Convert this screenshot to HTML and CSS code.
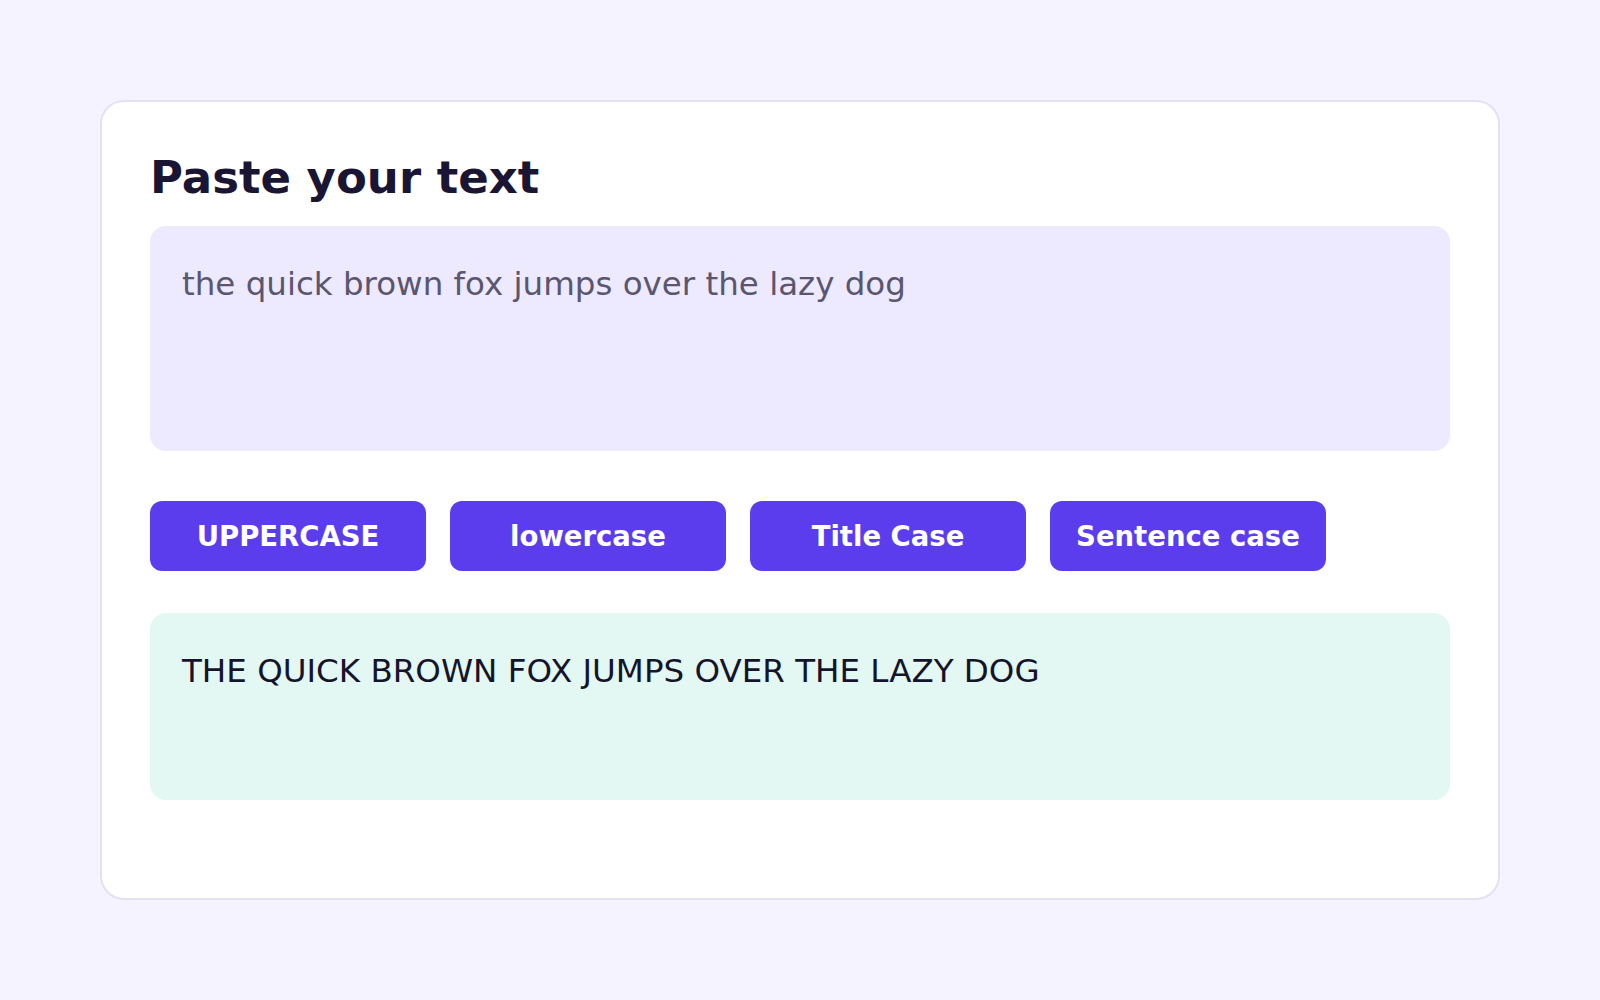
FILE: index.html
```html
<!DOCTYPE html>
<html lang="en">
<head>
<meta charset="UTF-8" />
<meta name="viewport" content="width=device-width, initial-scale=1.0" />
<title>Case Converter</title>
<link rel="stylesheet" href="styles.css">
</head>
<body>
<div class="card">
    <h1 class="card-title">Paste your text</h1>
    <textarea id="source" class="source-box" spellcheck="false">the quick brown fox jumps over the lazy dog</textarea>

    <div class="actions">
        <button class="case-btn" data-mode="upper">UPPERCASE</button>
        <button class="case-btn" data-mode="lower">lowercase</button>
        <button class="case-btn" data-mode="title">Title Case</button>
        <button class="case-btn" data-mode="sentence">Sentence case</button>
    </div>

    <div id="result" class="result-box">THE QUICK BROWN FOX JUMPS OVER THE LAZY DOG</div>
</div>

<script>
const source = document.getElementById("source");
const result = document.getElementById("result");

const convert = {
    upper: s => s.toUpperCase(),
    lower: s => s.toLowerCase(),
    title: s => s.toLowerCase().replace(/\b\w/g, c => c.toUpperCase()),
    sentence: s => s.toLowerCase().replace(/(^\s*\w|[.!?]\s+\w)/g, c => c.toUpperCase())
};

document.querySelectorAll(".case-btn").forEach(btn => {
    btn.addEventListener("click", () => {
        result.textContent = convert[btn.dataset.mode](source.value);
    });
});
</script>
</body>
</html>
```

FILE: styles.css
```css
:root {
    --bg: #f5f3ff;
    --ink: #1a1533;
    --violet: #5b3dee;
    --soft-violet: #ede9fe;
    --mint: #e3f8f3;
    --line: #e4e0f5;
}
* {
    box-sizing: border-box;
    margin: 0;
    padding: 0;
}
body {
    background: var(--bg);
    font-family: "DejaVu Sans", "Noto Sans", sans-serif;
    color: var(--ink);
}
.card {
    width: 1400px;
    min-height: 800px;
    margin: 100px auto;
    padding: 49px 48px 48px;
    background: #fff;
    border: 2px solid var(--line);
    border-radius: 24px;
}
.card-title {
    font-size: 45px;
    font-weight: 700;
    line-height: 1.2;
    margin-bottom: 21px;
}
.source-box,
.result-box {
    display: block;
    width: 100%;
    padding: 32px;
    font-family: inherit;
    font-size: 32.5px;
    line-height: 1.6;
    border: none;
    border-radius: 16px;
}
.source-box {
    height: 225px;
    background: var(--soft-violet);
    color: #5b5670;
    resize: none;
    outline: none;
}
.actions {
    display: flex;
    gap: 24px;
    margin: 50px 0 42px;
}
.case-btn {
    width: 276px;
    height: 70px;
    background: var(--violet);
    color: #fff;
    font-family: inherit;
    font-size: 27.5px;
    font-weight: 700;
    border: none;
    border-radius: 12px;
    cursor: pointer;
}
.case-btn:hover {
    filter: brightness(1.06);
}
.result-box {
    height: 187px;
    background: var(--mint);
    color: #15142a;
}
```
